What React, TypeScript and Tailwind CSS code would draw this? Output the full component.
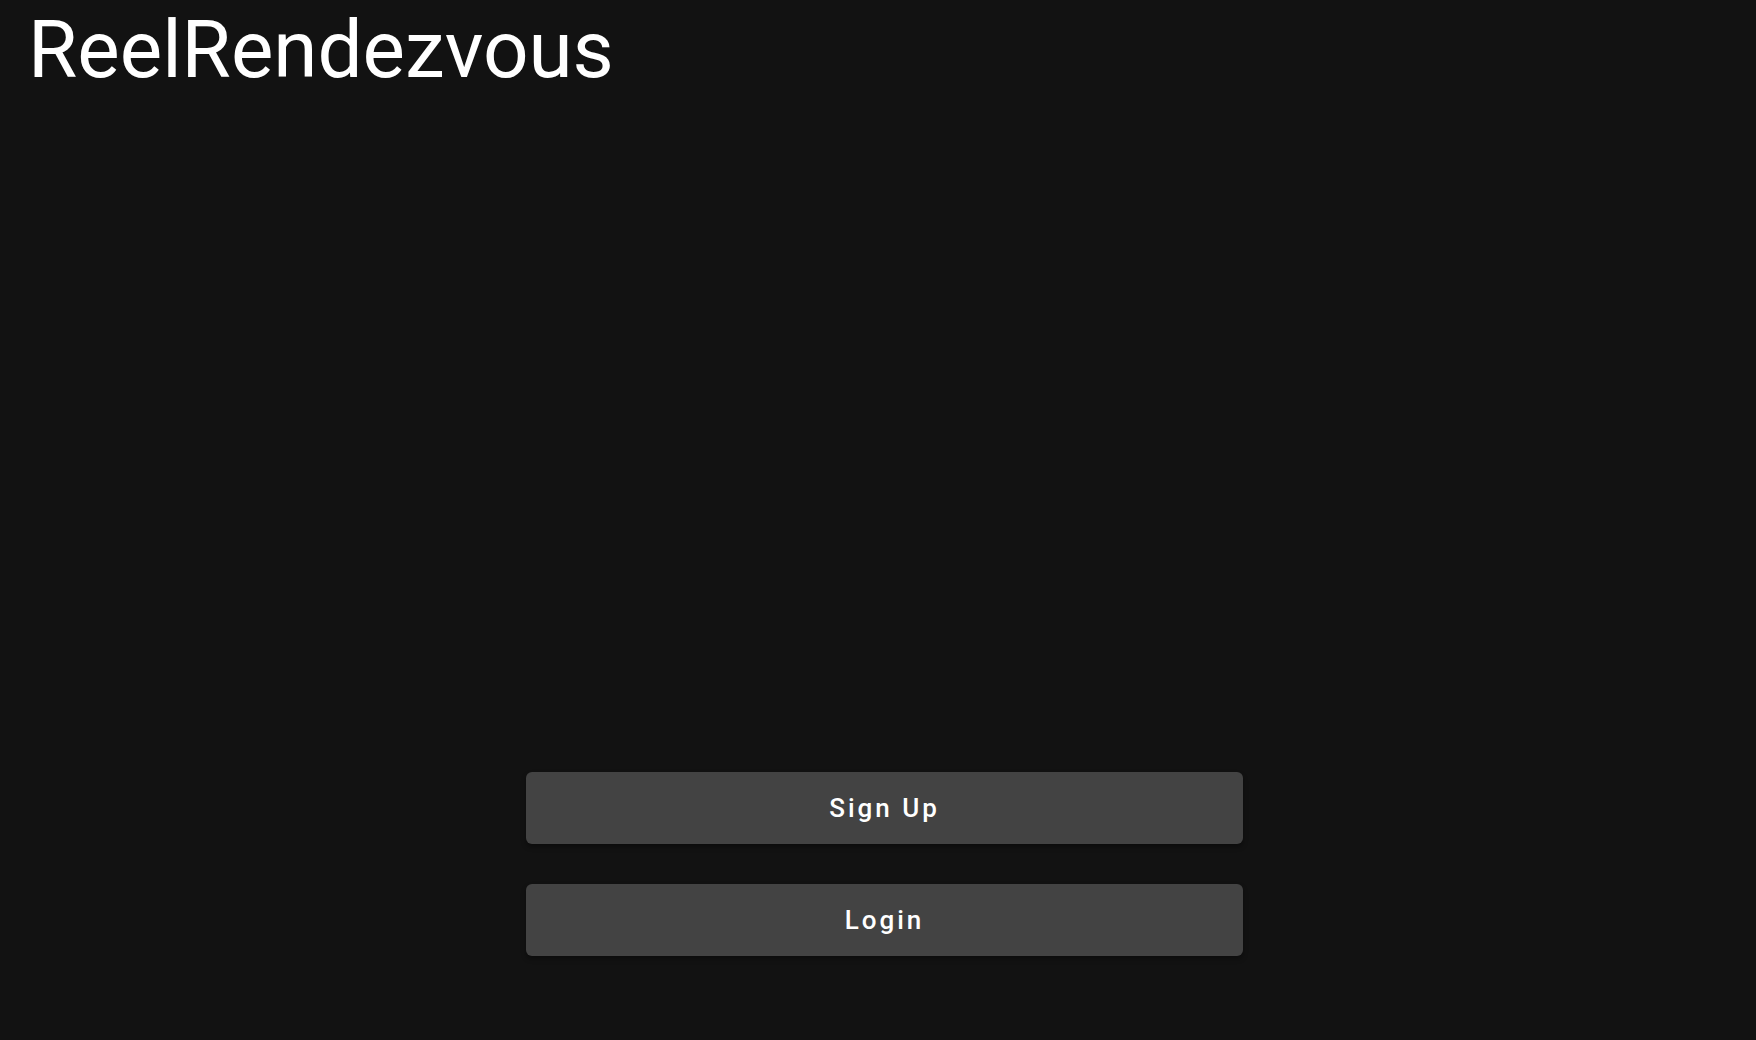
import React from "react";

export default function App() {
  return (
    <div
      className="w-[1756px] h-[1040px] bg-[#121212] text-white flex flex-col overflow-hidden"
      style={{ fontFamily: "Roboto, 'Noto Sans', sans-serif" }}
    >
      <h1 className="pl-[28px] pt-[6px] text-[80px] leading-[88px] font-normal tracking-[0px]">
        ReelRendezvous
      </h1>
      <div className="mt-[678px] flex flex-col items-center gap-[40px] pl-[13px]">
        <button className="w-[717px] h-[72px] rounded-[6px] bg-[#434343] text-white text-[26px] font-medium tracking-[3px] shadow-[0_3px_5px_rgba(0,0,0,0.35)]">
          Sign Up
        </button>
        <button className="w-[717px] h-[72px] rounded-[6px] bg-[#434343] text-white text-[26px] font-medium tracking-[3px] shadow-[0_3px_5px_rgba(0,0,0,0.35)]">
          Login
        </button>
      </div>
    </div>
  );
}
